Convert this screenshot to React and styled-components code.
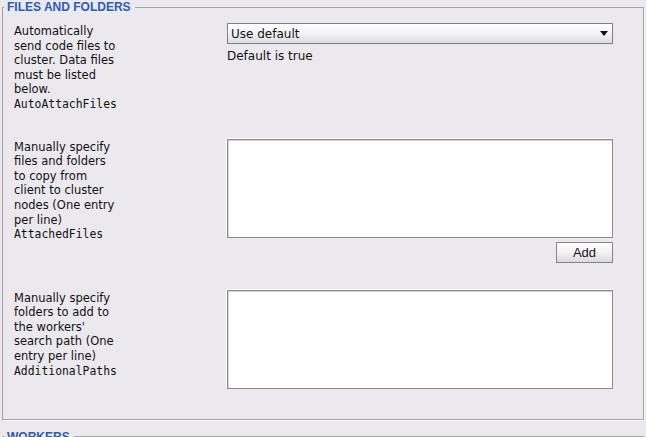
import React from "react";
import styled, { createGlobalStyle } from "styled-components";

const GlobalStyle = createGlobalStyle`
  html, body {
    margin: 0;
    padding: 0;
    background: #ebe9ee;
  }
  body {
    font-family: "DejaVu Sans", Verdana, sans-serif;
    color: #111;
    overflow: hidden;
  }
`;

const Group = styled.fieldset`
  margin: ${(p) => (p.$first ? "0" : "10px")} 2px 0 2px;
  padding: 0 0 0 1px;
  border: 1px solid #a4a3aa;
  box-shadow: 1px 1px 0 #f7f6f9;
  min-width: 0;
`;

const Legend = styled.legend`
  padding: 0 4px 0 3px;
  font-family: "Liberation Sans", Arial, sans-serif;
  font-weight: bold;
  font-size: 12px;
  line-height: 14px;
  color: #2d5db2;
`;

const Rows = styled.div`
  display: flex;
  flex-direction: column;
  gap: 27px;
  padding: 9px 30px 30px 10px;
`;

const Row = styled.div`
  display: grid;
  grid-template-columns: 213px 1fr;
  align-items: start;
`;

const Label = styled.div`
  width: 107px;
  padding-top: 1px;
  font-size: 11.5px;
  line-height: 14.6px;
`;

const PropName = styled.div`
  font-family: "DejaVu Sans Mono", monospace;
  font-size: 11.4px;
`;

const Control = styled.div`
  display: flex;
  flex-direction: column;
`;

const Select = styled.div`
  height: 19px;
  display: flex;
  align-items: center;
  justify-content: space-between;
  padding: 0 4px 0 3px;
  border: 1px solid #7f7f84;
  background: linear-gradient(#ffffff, #f1f1f3 55%, #dcdce0);
  font-size: 12px;
`;

const Hint = styled.div`
  margin-top: 5px;
  font-size: 12px;
  line-height: 14px;
`;

const TextArea = styled.textarea`
  display: block;
  box-sizing: border-box;
  width: 100%;
  height: 99px;
  margin: 0;
  resize: none;
  border: 1px solid #8a8a8e;
  box-shadow: inset 1px 1px 0 #d4d4d8, -1px -1px 0 #ffffff;
  background: #fff;
  font-family: "DejaVu Sans", sans-serif;
  font-size: 12px;
  outline: none;
`;

const Actions = styled.div`
  display: flex;
  justify-content: flex-end;
  margin-top: 4px;
`;

const Button = styled.button`
  width: 57px;
  height: 21px;
  padding: 0;
  border: 1px solid #85858a;
  background: linear-gradient(#ffffff, #f0f0f2 55%, #dadade);
  font-family: "Liberation Sans", Arial, sans-serif;
  font-size: 13px;
  color: #111;
`;

const Arrow = () => (
  <svg width="8" height="5" viewBox="0 0 8 5">
    <path d="M0 0h8L4 5z" fill="#111" />
  </svg>
);

export default function App() {
  return (
    <>
      <GlobalStyle />
      <Group $first>
        <Legend>FILES AND FOLDERS</Legend>
        <Rows>
          <Row>
            <Label>
              Automatically send code files to cluster. Data files must be listed below.
              <PropName>AutoAttachFiles</PropName>
            </Label>
            <Control>
              <Select>
                <span>Use default</span>
                <Arrow />
              </Select>
              <Hint>Default is true</Hint>
            </Control>
          </Row>
          <Row>
            <Label>
              Manually specify files and folders to copy from client to cluster nodes (One entry per line)
              <PropName>AttachedFiles</PropName>
            </Label>
            <Control>
              <TextArea />
              <Actions>
                <Button>Add</Button>
              </Actions>
            </Control>
          </Row>
          <Row>
            <Label>
              Manually specify folders to add to the workers' search path (One entry per line)
              <PropName>AdditionalPaths</PropName>
            </Label>
            <Control>
              <TextArea />
            </Control>
          </Row>
        </Rows>
      </Group>
      <Group>
        <Legend>WORKERS</Legend>
        <Rows />
      </Group>
    </>
  );
}
